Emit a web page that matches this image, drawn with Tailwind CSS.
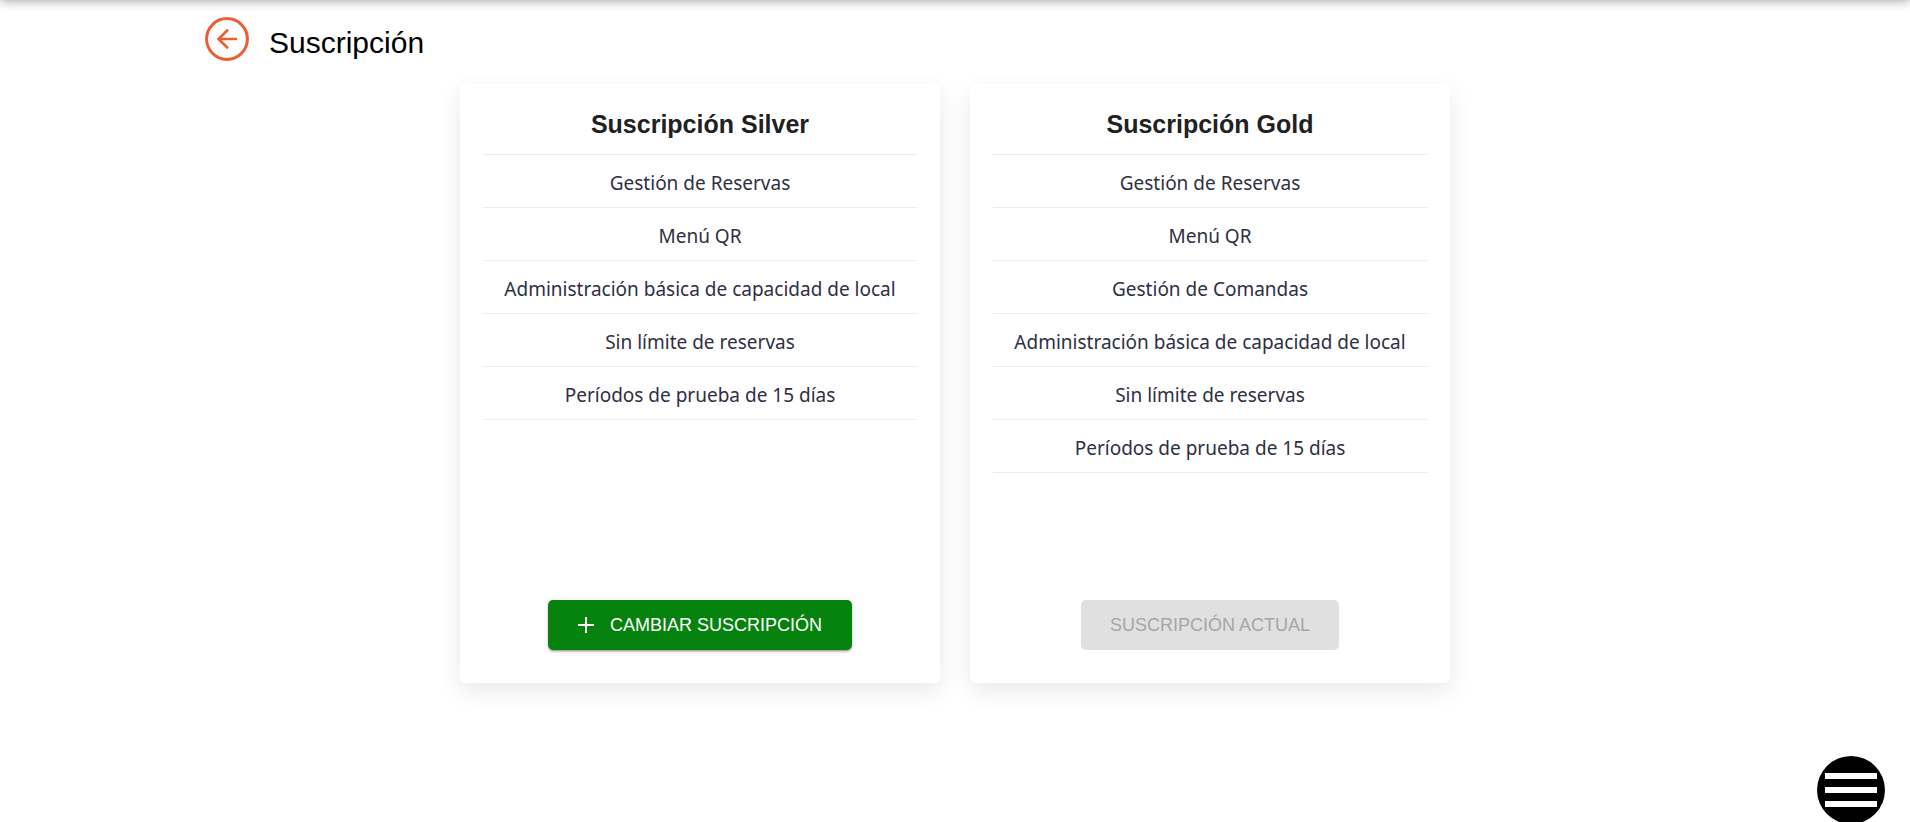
<!DOCTYPE html>
<html lang="es">
<head>
<meta charset="utf-8">
<meta name="viewport" content="width=device-width, initial-scale=1">
<title>Suscripción</title>
<script src="https://cdn.jsdelivr.net/npm/@tailwindcss/browser@4"></script>
</head>
<body class="min-h-screen overflow-hidden bg-white font-['Liberation_Sans',Arial,sans-serif] text-black">
  <header class="fixed inset-x-0 -top-16 h-16 bg-white shadow-[0_1px_10px_0_rgba(0,0,0,0.36)]"></header>

  <main class="mx-auto max-w-[1500px] pt-4">
    <div class="flex h-[52px] items-start gap-5">
      <a href="#" aria-label="Volver" class="mt-px block">
        <svg class="size-11" viewBox="0 0 44 44" fill="none" stroke="#ea5f35" stroke-width="3">
          <circle cx="22" cy="22" r="20.4"/>
          <path d="M32 22H13.5M23 12.8 13.5 22l9.5 9.2" stroke-width="2.6"/>
        </svg>
      </a>
      <h1 class="pt-[9px] text-[30px] leading-9">Suscripción</h1>
    </div>

    <div class="mt-4 flex flex-wrap justify-center gap-[30px]">
      <section class="flex min-h-[599px] w-[480px] flex-col items-center rounded-[5px] bg-white px-[23px] pb-[33px] shadow-[0_8px_24px_rgba(0,0,0,0.09)]">
        <h2 class="w-full border-b border-[#ebebeb] pt-[25px] pb-[15px] text-center text-[25px] leading-[30px] font-bold text-[#212121]">Suscripción Silver</h2>
        <ul class="w-full text-center font-['Noto_Sans',sans-serif] text-[19px] leading-7 text-[#2f2f44]">
          <li class="border-b border-[#ebebeb] pt-[14px] pb-[10px]">Gestión de Reservas</li>
          <li class="border-b border-[#ebebeb] pt-[14px] pb-[10px]">Menú QR</li>
          <li class="border-b border-[#ebebeb] pt-[14px] pb-[10px]">Administración básica de capacidad de local</li>
          <li class="border-b border-[#ebebeb] pt-[14px] pb-[10px]">Sin límite de reservas</li>
          <li class="border-b border-[#ebebeb] pt-[14px] pb-[10px]">Períodos de prueba de 15 días</li>
        </ul>
        <button type="button" class="mt-auto flex h-[50px] items-center rounded-[5px] bg-[#06830f] px-[30px] text-lg text-white shadow-[0_3px_1px_-2px_rgba(0,0,0,0.2),0_2px_2px_0_rgba(0,0,0,0.14),0_1px_5px_0_rgba(0,0,0,0.12)]">
          <svg class="mr-4 size-4 shrink-0" viewBox="0 0 16 16" fill="none" stroke="currentColor" stroke-width="2"><path d="M8 0v16M0 8h16"/></svg>
          CAMBIAR SUSCRIPCIÓN
        </button>
      </section>

      <section class="flex min-h-[599px] w-[480px] flex-col items-center rounded-[5px] bg-white px-[23px] pb-[33px] shadow-[0_8px_24px_rgba(0,0,0,0.09)]">
        <h2 class="w-full border-b border-[#ebebeb] pt-[25px] pb-[15px] text-center text-[25px] leading-[30px] font-bold text-[#212121]">Suscripción Gold</h2>
        <ul class="w-full text-center font-['Noto_Sans',sans-serif] text-[19px] leading-7 text-[#2f2f44]">
          <li class="border-b border-[#ebebeb] pt-[14px] pb-[10px]">Gestión de Reservas</li>
          <li class="border-b border-[#ebebeb] pt-[14px] pb-[10px]">Menú QR</li>
          <li class="border-b border-[#ebebeb] pt-[14px] pb-[10px]">Gestión de Comandas</li>
          <li class="border-b border-[#ebebeb] pt-[14px] pb-[10px]">Administración básica de capacidad de local</li>
          <li class="border-b border-[#ebebeb] pt-[14px] pb-[10px]">Sin límite de reservas</li>
          <li class="border-b border-[#ebebeb] pt-[14px] pb-[10px]">Períodos de prueba de 15 días</li>
        </ul>
        <button type="button" disabled class="mt-auto flex h-[50px] items-center rounded-[5px] bg-[#e0e0e0] px-[29px] text-lg text-[#a6a6a6]">SUSCRIPCIÓN ACTUAL</button>
      </section>
    </div>
  </main>

  <button type="button" aria-label="Menú" class="fixed right-[25px] -bottom-0.5 flex size-[68px] flex-col items-center justify-center gap-2 rounded-full bg-black">
    <span class="h-1.5 w-[52px] bg-white"></span>
    <span class="h-1.5 w-[52px] bg-white"></span>
    <span class="h-1.5 w-[52px] bg-white"></span>
  </button>
</body>
</html>
